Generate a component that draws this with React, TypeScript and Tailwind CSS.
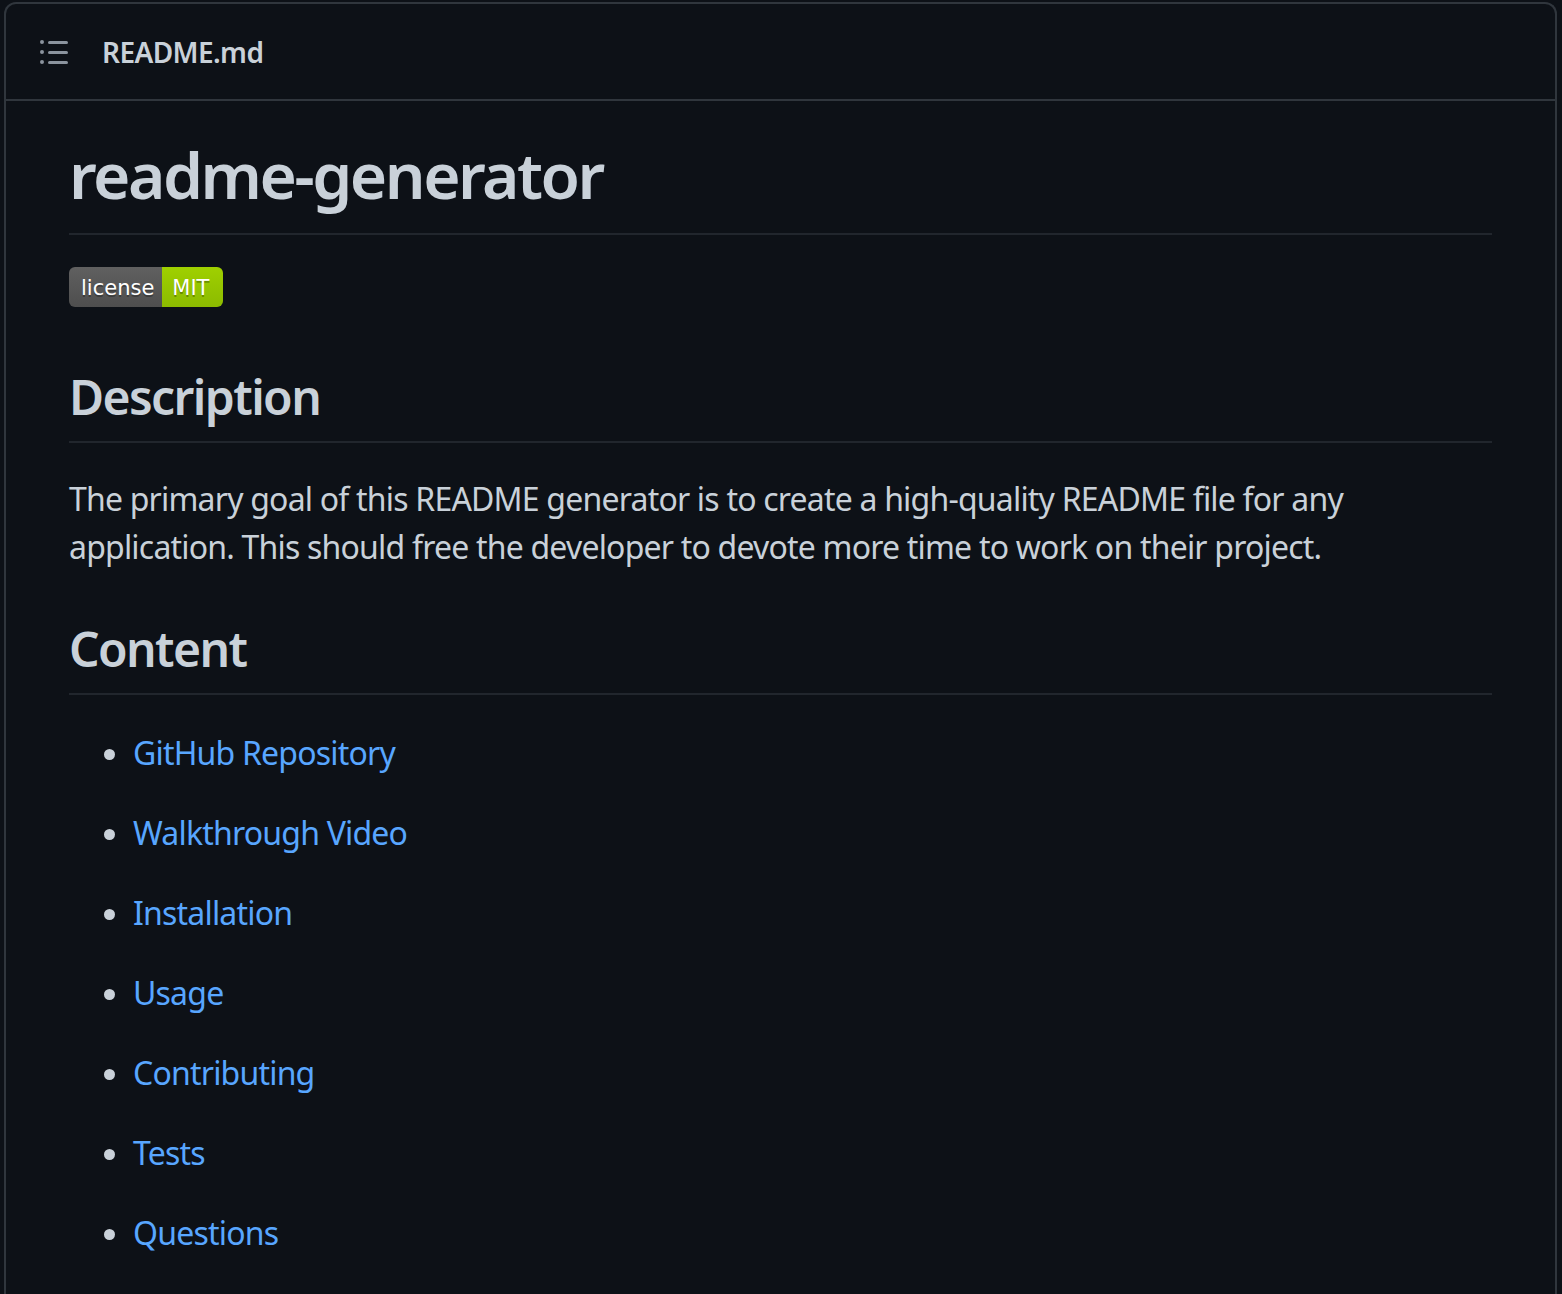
import React from 'react';

const FONT = { fontFamily: '"Noto Sans", "Open Sans", sans-serif' };

const ListIcon = () => (
  <svg viewBox="0 0 16 16" width="32" height="32" fill="#8b949e">
    <path d="M5.75 2.5h8.5a.75.75 0 0 1 0 1.5h-8.5a.75.75 0 0 1 0-1.5Zm0 5h8.5a.75.75 0 0 1 0 1.5h-8.5a.75.75 0 0 1 0-1.5Zm0 5h8.5a.75.75 0 0 1 0 1.5h-8.5a.75.75 0 0 1 0-1.5ZM2 14a1 1 0 1 1 0-2 1 1 0 0 1 0 2Zm1-6a1 1 0 1 1-2 0 1 1 0 0 1 2 0ZM2 4a1 1 0 1 1 0-2 1 1 0 0 1 0 2Z" />
  </svg>
);

const LicenseBadge = () => (
  <div
    className="inline-flex h-[40px] overflow-hidden rounded-[6px] text-[21px] text-white"
    style={{ fontFamily: '"DejaVu Sans", Verdana, sans-serif' }}
  >
    <span className="flex items-center pt-[3px] pl-[12px] pr-[8px] bg-gradient-to-b from-[#606060] to-[#4e4e4e] [text-shadow:0_2px_0_rgba(1,1,1,0.3)]">
      license
    </span>
    <span className="flex items-center pt-[3px] pl-[10px] pr-[14px] bg-gradient-to-b from-[#9fd000] to-[#8cbb00] [text-shadow:0_2px_0_rgba(1,1,1,0.3)]">
      MIT
    </span>
  </div>
);

const links = [
  'GitHub Repository',
  'Walkthrough Video',
  'Installation',
  'Usage',
  'Contributing',
  'Tests',
  'Questions',
];

export default function App() {
  return (
    <div className="min-h-screen bg-[#0d1117] pt-[2px] pl-[4px] pr-[5px]" style={FONT}>
      <div className="border-2 border-b-0 border-[#30363d] rounded-t-[12px] min-h-[1300px]">
        {/* Header */}
        <div className="h-[97px] flex items-center border-b-2 border-[#30363d] pl-[32px]">
          <ListIcon />
          <span className="ml-[32px] text-[28px] font-semibold tracking-[-0.6px] text-[#c9d1d9]">README.md</span>
        </div>

        {/* Markdown body */}
        <article className="px-[63px] pt-[34px] text-[#c9d1d9]">
          <h1 className="text-[64px] leading-[80px] font-semibold tracking-[-2.5px] pb-[18px] border-b-2 border-[#21262d] mb-[32px]">
            readme-generator
          </h1>

          <div className="mb-[60px]">
            <LicenseBadge />
          </div>

          <h2 className="text-[48px] leading-[60px] font-semibold tracking-[-1.6px] pb-[14px] border-b-2 border-[#21262d] mb-[32px]">
            Description
          </h2>
          <p className="text-[32px] leading-[48px] tracking-[-0.8px] mb-[48px]">
            The primary goal of this README generator is to create a high-quality README file for any
            application. This should free the developer to devote more time to work on their project.
          </p>

          <h2 className="text-[48px] leading-[60px] font-semibold tracking-[-1.6px] pb-[14px] border-b-2 border-[#21262d] mb-[34px]">
            Content
          </h2>
          <ul className="list-disc pl-[64px] flex flex-col gap-[32px] text-[32px] leading-[48px] tracking-[-0.8px]">
            {links.map(l => (
              <li key={l}>
                <a href="#" className="text-[#58a6ff]">{l}</a>
              </li>
            ))}
          </ul>
        </article>
      </div>
    </div>
  );
}
